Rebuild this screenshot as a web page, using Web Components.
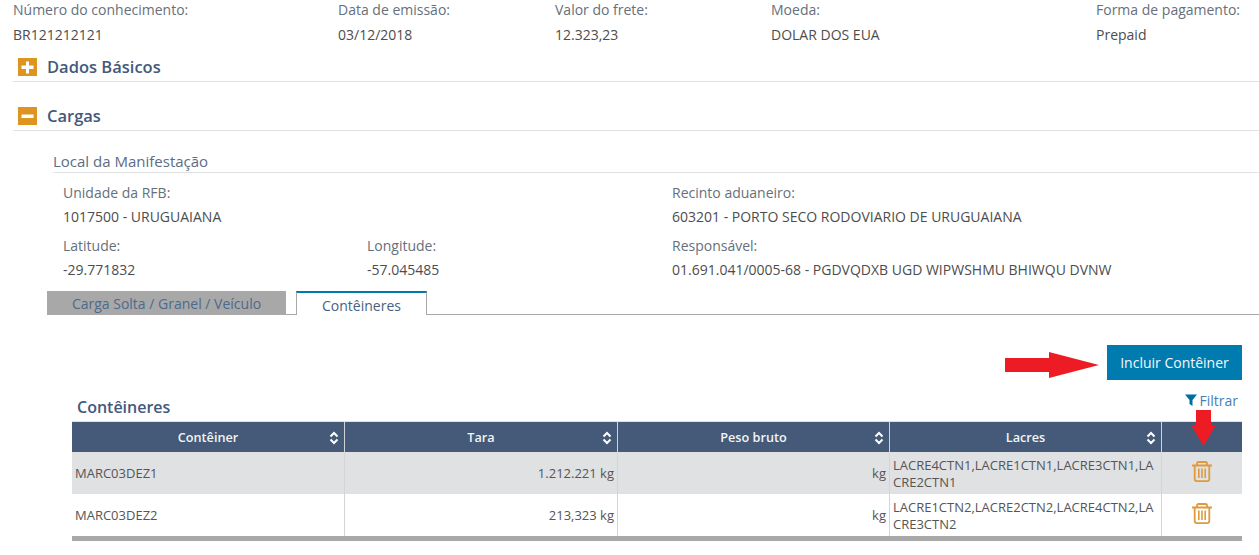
<!DOCTYPE html>
<html lang="pt">
<head>
<meta charset="utf-8">
<title>Contêineres</title>
<style>
  html, body { margin: 0; padding: 0; background: #fff; overflow: hidden; }
  body { font-family: "Open Sans", "Liberation Sans", sans-serif; font-size: 14px; color: #555; }
</style>
</head>
<body>
<x-page></x-page>

<script>
class XField extends HTMLElement {
  constructor() {
    super();
    this.attachShadow({ mode: 'open' }).innerHTML = `
      <style>
        :host { display: block; font-size: 14px; line-height: 24px; white-space: nowrap; }
        .label { color: #66707a; }
        .value { color: #4d4d4d; }
      </style>
      <div class="label">${this.getAttribute('label')}</div>
      <div class="value">${this.getAttribute('value')}</div>
    `;
  }
}
customElements.define('x-field', XField);

class XSection extends HTMLElement {
  constructor() {
    super();
    const open = this.hasAttribute('open');
    const bar = open ? '' : '<rect x="8" y="3.5" width="3" height="12" fill="#fff"/>';
    this.attachShadow({ mode: 'open' }).innerHTML = `
      <style>
        :host { display: flex; align-items: center; height: 25px; margin-left: 13px; padding: 0 0 2px 5px;
                border-bottom: 1px solid #dfe2e4; }
        svg { width: 19px; height: 18px; flex: none; margin-right: 10px; }
        span { font-size: 16.500px; font-weight: 600; color: #44597a; }
      </style>
      <svg viewBox="0 0 19 18"><rect width="19" height="18" fill="#de9420"/>
        <rect x="3.5" y="7.5" width="12" height="3.5" fill="#fff"/>${bar}</svg>
      <span><slot></slot></span>
    `;
  }
}
customElements.define('x-section', XSection);

class XTabs extends HTMLElement {
  constructor() {
    super();
    this.attachShadow({ mode: 'open' }).innerHTML = `
      <style>
        :host { display: flex; height: 24px; margin-left: 47px; align-items: flex-end; font-size: 14px;
                position: relative; }
        .off { width: 239px; height: 24px; background: #a8a8a8; color: #4d6a8c; text-align: center;
               line-height: 26px; }
        .gap { width: 10px; border-bottom: 1px solid #a8a8a8; }
        .on { width: 129px; height: 22px; border: 1px solid #a8a8a8; border-top: 2px solid #007bb0;
              border-bottom: 0; color: #47627f; text-align: center; line-height: 26px; background: #fff; }
        .rest { flex: 1; border-bottom: 1px solid #a8a8a8; }
      </style>
      <div class="off">Carga Solta / Granel / Veículo</div>
      <div class="gap"></div>
      <div class="on">Contêineres</div>
      <div class="rest"></div>
    `;
  }
}
customElements.define('x-tabs', XTabs);

const sortIcon = `<svg width="10" height="14" viewBox="0 0 10 14" fill="none" stroke="#fff" stroke-width="2">
  <path d="M1.500 5.500 5 2l3.500 3.500M1.500 8.500 5 12l3.500-3.500"/></svg>`;

const trashIcon = `<svg width="20" height="21" viewBox="0 0 20 21" fill="none" stroke="#de9a3c">
  <path stroke-width="1.800" d="M0 4.500h20M5 4.500V2.500Q5 1 6.700 1h6.600Q15 1 15 2.500v2M2.700 4.500V18Q2.700 20.100 5 20.100h10Q17.300 20.100 17.300 18V4.500"/>
  <path stroke-width="1.600" d="M6.800 7.500v9.500M10 7.500v9.500M13.200 7.500v9.500"/></svg>`;

class XTable extends HTMLElement {
  constructor() {
    super();
    const heads = ['Contêiner', 'Tara', 'Peso bruto', 'Lacres'];
    const rows = [
      ['MARC03DEZ1', '1.212.221 kg', 'kg', 'LACRE4CTN1,LACRE1CTN1,LACRE3CTN1,LACRE2CTN1'],
      ['MARC03DEZ2', '213,323 kg', 'kg', 'LACRE1CTN2,LACRE2CTN2,LACRE4CTN2,LACRE3CTN2']
    ];
    const headCells = heads.map(h => `<div class="th"><span>${h}</span>${sortIcon}</div>`).join('');
    const bodyRows = rows.map((r, i) => `
      <div class="td ${i === 0 ? 'alt' : ''}">${r[0]}</div>
      <div class="td num ${i === 0 ? 'alt' : ''}">${r[1]}</div>
      <div class="td num ${i === 0 ? 'alt' : ''}">${r[2]}</div>
      <div class="td seals ${i === 0 ? 'alt' : ''}">${r[3]}</div>
      <div class="td act ${i === 0 ? 'alt' : ''}">${trashIcon}</div>`).join('');
    this.attachShadow({ mode: 'open' }).innerHTML = `
      <style>
        :host { display: grid; grid-template-columns: 273px 273px 272px 272px 80px;
                grid-template-rows: 30px 42px 42px; margin: 0 17px 0 72px; border-bottom: 5px solid #a8a8a8;
                border-top: 1px solid #dfe2e4; font-size: 13px; color: #555; }
        .th { background: #445a78; color: #f2f4f6; font-weight: 600; font-size: 12.700px; position: relative;
              display: flex; align-items: center; justify-content: center; border-right: 1px solid #cfd3d6; }
        .th svg { position: absolute; right: 5px; top: 9px; }
        .end { border-right: 0; background: #445a78; }
        .td { display: flex; align-items: center; padding: 0 3px; border-right: 1px solid #d5d5d5; min-width: 0; }
        .alt { background: #e0e1e3; }
        .num { justify-content: flex-end; }
        .seals { display: block; word-break: break-all; line-height: 17px; padding: 5px 3px 0; }
        .act { border-right: 0; justify-content: center; padding: 0 0 3px 0; }
      </style>
      ${headCells}<div class="end"></div>
      ${bodyRows}
    `;
  }
}
customElements.define('x-table', XTable);

class XPage extends HTMLElement {
  constructor() {
    super();
    this.attachShadow({ mode: 'open' }).innerHTML = `
      <style>
        :host { display: block; position: relative; height: 555px; overflow: hidden; }
        .summary { display: grid; grid-template-columns: 325px 217px 216px 325px 1fr; padding-left: 13px;
                   margin-top: -3px; height: 48px; }
        .summary x-field { line-height: 25px; }
        .s1 { margin-top: 9px; }
        .s2 { margin-top: 21px; }
        .local { margin: 16px 0 0 53px; height: 25px; border-bottom: 1px solid #dfe2e4; font-size: 15px;
                 color: #5a6d85; line-height: 28px; }
        .fields { display: grid; grid-template-columns: 304px 305px 1fr; margin-left: 63px; padding-top: 8px;
                  row-gap: 5px; }
        .fields .wide { grid-column: span 2; }
        x-tabs { margin-top: 9px; }
        .actions { display: flex; justify-content: flex-end; padding: 30px 17px 0 0; }
        button { width: 135px; height: 35px; border: 0; background: #007bb0; color: #f4f8fa;
                 font: 14px "Open Sans", "Liberation Sans", sans-serif; padding: 0; }
        .title-row { display: flex; justify-content: space-between; margin: 9px 21px 0 77px; height: 32px; }
        h3 { margin: 8px 0 0; font-size: 16px; line-height: 20px; font-weight: 600; color: #44597a; }
        .filter { display: flex; align-items: center; gap: 2px; height: 22px; color: #4a7fb0; font-size: 14px; }
        .arrow { position: absolute; }
      </style>
      <div class="summary">
        <x-field label="Número do conhecimento:" value="BR121212121"></x-field>
        <x-field label="Data de emissão:" value="03/12/2018"></x-field>
        <x-field label="Valor do frete:" value="12.323,23"></x-field>
        <x-field label="Moeda:" value="DOLAR DOS EUA"></x-field>
        <x-field label="Forma de pagamento:" value="Prepaid"></x-field>
      </div>
      <x-section class="s1">Dados Básicos</x-section>
      <x-section class="s2" open>Cargas</x-section>
      <div class="local">Local da Manifestação</div>
      <div class="fields">
        <x-field class="wide" label="Unidade da RFB:" value="1017500 - URUGUAIANA"></x-field>
        <x-field label="Recinto aduaneiro:" value="603201 - PORTO SECO RODOVIARIO DE URUGUAIANA"></x-field>
        <x-field label="Latitude:" value="-29.771832"></x-field>
        <x-field label="Longitude:" value="-57.045485"></x-field>
        <x-field label="Responsável:" value="01.691.041/0005-68 - PGDVQDXB UGD WIPWSHMU BHIWQU DVNW"></x-field>
      </div>
      <x-tabs></x-tabs>
      <div class="actions"><button>Incluir Contêiner</button></div>
      <div class="title-row">
        <h3>Contêineres</h3>
        <div class="filter">
          <svg width="12" height="12" viewBox="0 0 12 12"><path d="M0 .5h12L7.500 6v6L4.500 10V6z" fill="#006f9f"/></svg>
          Filtrar
        </div>
      </div>
      <x-table></x-table>
      <svg class="arrow" style="left:1005px;top:352px" width="94" height="26" viewBox="0 0 94 26">
        <path d="M0 6h44V0l50 13-50 13v-6H0z" fill="#ed1c24"/></svg>
      <svg class="arrow" style="left:1191px;top:410px" width="25" height="36" viewBox="0 0 25 36">
        <path d="M5 0h15v15h5L12.500 36 0 15h5z" fill="#ed1c24"/></svg>
    `;
  }
}
customElements.define('x-page', XPage);
</script>
</body>
</html>
